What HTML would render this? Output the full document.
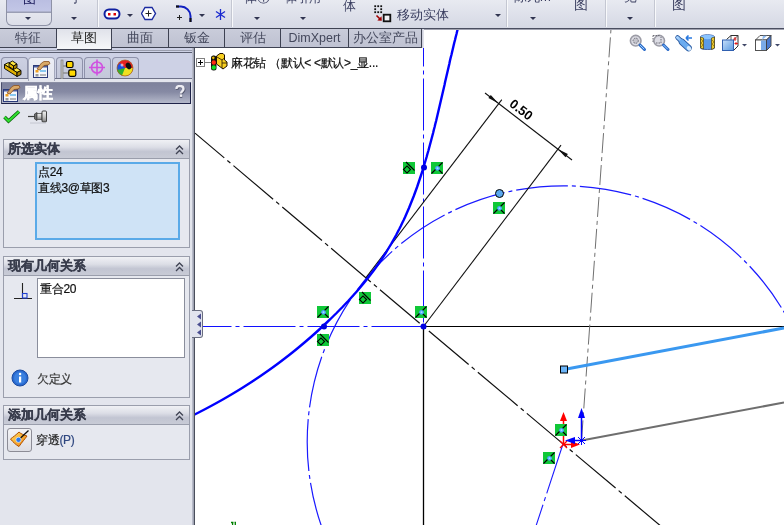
<!DOCTYPE html>
<html><head><meta charset="utf-8">
<style>
*{margin:0;padding:0;box-sizing:border-box}
html,body{width:784px;height:525px;overflow:hidden;background:#fff;font-family:"Liberation Sans",sans-serif}
#root{position:relative;width:784px;height:525px;overflow:hidden;background:#fff;will-change:transform}
.abs{position:absolute}
#tb{left:0;top:0;width:784px;height:29px;background:linear-gradient(#e8eaf1,#d5d8e4);border-bottom:1px solid #4a4e60;box-shadow:0 1px 0 #a0a2b0}
.sep{position:absolute;top:0;width:2px;height:27px;border-left:1px solid #c4c7d2;border-right:1px solid #f8f9fb}
.dd{position:absolute;width:0;height:0;border-left:3px solid transparent;border-right:3px solid transparent;border-top:3px solid #303450}
.tt{position:absolute;font-size:13px;color:#3a3e60;white-space:nowrap;line-height:14px}
#tabs{left:0;top:28px;width:422px;height:20px;z-index:2}
.tab{position:absolute;top:0;height:20px;background:linear-gradient(#c9ccda,#bfc2d2);border:1px solid #3e4252;border-width:1px 1px 1px 0;font-size:13px;color:#44485c;text-align:center;line-height:18px;white-space:nowrap}
.tab.act{background:linear-gradient(#e0e2ea,#f6f7f9);height:22px;color:#222}
#panel{left:0;top:48px;width:195px;height:477px;background:#e3e5ed;border-right:1px solid #4a4e5c}
.ptab{position:absolute;top:9px;width:27px;height:21px;border:1px solid #8e92aa;border-bottom:none;border-radius:4px 4px 0 0;background:linear-gradient(#ccd0e2,#c4c8da)}
.ptab.act{background:linear-gradient(#eceef6,#e4e6ee);height:24px;border-color:#a4a8bc}
.gb{position:absolute;left:3px;width:187px;border:1px solid #9a9eac;background:#e6e8ef}
.gbh{height:19px;background:linear-gradient(#f0f1f5,#dcdee6 40%,#c2c5d2 65%,#c8cbd6);border-bottom:1px solid #9a9eac;font-size:13px;font-weight:bold;color:#383c4c;-webkit-text-stroke:0.3px #383c4c;line-height:18px;padding-left:4px;position:relative}
.chev{position:absolute;right:5px;top:5px;width:9px;height:10px}
.cjk{font-size:12px;color:#101010;line-height:16px;white-space:nowrap;letter-spacing:-0.3px;-webkit-text-stroke:0.2px currentColor}
</style></head><body><div id="root">

<!-- graphics -->
<svg class="abs" style="left:0;top:0" width="784" height="525" viewBox="0 0 784 525">
 <rect x="195" y="29" width="589" height="496" fill="#fff"/>
 <!-- big dash-dot circle -->
 <path d="M819.4,441.9 A256.1,256.1 0 1 1 307.2,441.9 A256.1,256.1 0 1 1 819.4,441.9" fill="none" stroke="#1a1aff" stroke-width="1.2" stroke-dasharray="52 4 4 4" stroke-dashoffset="57"/>
 <!-- vertical blue centerline -->
 <line x1="423.5" y1="326.5" x2="423.5" y2="29" stroke="#1010ff" stroke-width="1" stroke-dasharray="52 4 4 4" stroke-dashoffset="-4"/>
 <line x1="423.5" y1="326.5" x2="195" y2="326.5" stroke="#1010ff" stroke-width="1" stroke-dasharray="52 4 4 4"/>
 <!-- black solids -->
 <line x1="423.5" y1="326.5" x2="423.5" y2="525" stroke="#000" stroke-width="1.3"/>
 <line x1="423.5" y1="326.5" x2="784" y2="326.5" stroke="#000" stroke-width="1.2"/>
 <!-- diagonal dash-dot black -->
 <line x1="423.5" y1="326.5" x2="195" y2="133.1" stroke="#111" stroke-width="1.2" stroke-dasharray="52 4 4 4" stroke-dashoffset="-5"/>
 <line x1="423.5" y1="326.5" x2="661.9" y2="527" stroke="#111" stroke-width="1.2" stroke-dasharray="52 4 4 4" stroke-dashoffset="57"/>
 <!-- extension lines -->
 <line x1="366" y1="277.6" x2="501.8" y2="99.6" stroke="#111" stroke-width="1.1"/>
 <line x1="423.5" y1="326.5" x2="561" y2="145.2" stroke="#111" stroke-width="1.1"/>
 <!-- dimension line -->
 <line x1="485" y1="93" x2="572" y2="160" stroke="#111" stroke-width="1.1"/>
 <polygon points="498.3,103.2 488.4,98.1 490.8,94.9" fill="#111"/>
 <polygon points="557.8,149.1 565.5,157.2 567.9,154" fill="#111"/>
 <text x="0" y="0" transform="translate(508.5,105.5) rotate(37.6)" font-family="Liberation Sans" font-size="13" font-weight="bold" fill="#000">0.50</text>
 <!-- thick blue curve -->
 <path d="M459.6,22.0 L458.8,25.0 L458.0,28.0 L457.2,31.0 L456.5,34.0 L455.7,37.0 L455.0,40.0 L454.2,43.0 L453.5,46.0 L452.8,49.0 L452.1,52.0 L451.4,55.0 L450.6,58.0 L449.9,61.0 L449.3,64.0 L448.6,67.0 L447.9,70.0 L447.2,73.0 L446.5,76.0 L445.8,79.0 L445.1,82.0 L444.5,85.0 L443.8,88.0 L443.1,91.0 L442.4,94.0 L441.7,97.0 L441.0,100.0 L440.3,103.0 L439.6,106.0 L438.9,109.0 L438.2,112.0 L437.5,115.0 L436.8,118.0 L436.1,121.0 L435.3,124.0 L434.6,127.0 L433.8,130.0 L433.1,133.0 L432.3,136.0 L431.5,139.0 L430.7,142.0 L429.9,145.0 L429.1,148.0 L428.3,151.0 L427.4,154.0 L426.6,157.0 L425.7,160.0 L424.8,163.0 L423.9,166.0 L423.0,169.0 L422.1,172.0 L421.1,175.0 L420.1,178.0 L419.1,181.0 L418.1,184.0 L417.1,187.0 L416.0,190.0 L414.9,193.0 L413.8,196.0 L412.6,199.0 L411.4,202.0 L410.2,205.0 L409.0,208.0 L407.7,211.0 L406.4,214.0 L405.1,217.0 L403.7,220.0 L402.2,223.0 L400.8,226.0 L399.3,229.0 L397.7,232.0 L396.2,235.0 L394.5,238.0 L392.8,241.0 L391.1,244.0 L389.3,247.0 L387.5,250.0 L385.7,253.0 L383.7,256.0 L381.8,259.0 L379.7,262.0 L377.6,265.0 L375.5,268.0 L373.3,271.0 L371.0,274.0 L368.7,277.0 L366.3,280.0 L363.9,283.0 L361.4,286.0 L358.9,289.0 L356.3,292.0 L353.6,295.0 L350.9,298.0 L348.2,301.0 L345.3,304.0 L342.5,307.0 L339.5,310.0 L336.6,313.0 L333.5,316.0 L330.5,319.0 L327.3,322.0 L324.1,325.0 L320.9,328.0 L317.6,331.0 L314.3,334.0 L310.9,337.0 L307.4,340.0 L303.9,343.0 L300.3,346.0 L296.7,349.0 L293.0,352.0 L289.2,355.0 L285.3,358.0 L281.4,361.0 L277.4,364.0 L273.3,367.0 L269.1,370.0 L264.8,373.0 L260.5,376.0 L256.0,379.0 L251.5,382.0 L246.8,385.0 L242.1,388.0 L237.2,391.0 L232.2,394.0 L227.1,397.0 L221.9,400.0 L216.5,403.0 L211.0,406.0 L205.4,409.0 L199.6,412.0 L193.7,415.0 L187.7,418.0 L181.5,421.0" fill="none" stroke="#0000ff" stroke-width="2.4"/>
 <!-- gray dash-dot near vertical -->
 <line x1="611" y1="29" x2="581.5" y2="440.5" stroke="#707070" stroke-width="1" stroke-dasharray="20 4 4 4" stroke-dashoffset="23.6"/>
 <!-- gray solid line -->
 <line x1="581.5" y1="440.5" x2="784" y2="402.5" stroke="#6e6e6e" stroke-width="2"/>
 <!-- light blue selected line -->
 <line x1="564" y1="369.5" x2="784" y2="328" stroke="#3a98f0" stroke-width="3"/>
 <rect x="560.5" y="366" width="7" height="7" fill="#6ab4f8" stroke="#000" stroke-width="1"/>
 <!-- blue dash-dot from origin -->
 <line x1="563" y1="444" x2="536" y2="526" stroke="#1a1aff" stroke-width="1.1" stroke-dasharray="52 4 4 4"/>
 <!-- points -->
 <circle cx="423.5" cy="326.5" r="3" fill="#0000e0"/>
 <circle cx="424" cy="167.5" r="3" fill="#0000e0"/>
 <circle cx="324" cy="326.5" r="3" fill="#0000e0"/>
 <circle cx="499.5" cy="193.5" r="4" fill="#5aa8f0" stroke="#000" stroke-width="1"/>
 <!-- triads -->
 <g stroke="#ff0000" stroke-width="1.5" fill="#ff0000">
  <line x1="563.5" y1="444.5" x2="563.5" y2="420"/>
  <polygon points="560,421 567,421 563.5,412" stroke="none"/>
  <line x1="563.5" y1="444.5" x2="572" y2="444.5"/>
  <polygon points="571,441 571,448 580,444.5" stroke="none"/>
  <path d="M560,441 L567,448 M567,441 L560,448" stroke-width="1.3"/>
 </g>
 <g stroke="#0000ff" stroke-width="1.5" fill="#0000ff">
  <line x1="581.5" y1="440.5" x2="581.5" y2="417"/>
  <polygon points="578,418 585,418 581.5,408" stroke="none"/>
  <line x1="581.5" y1="440.5" x2="574" y2="440.5"/>
  <polygon points="575,437 575,444 565,440.5" stroke="none"/>
  <path d="M578,437 L585,444 M585,437 L578,444 M581.5,436 V445 M577,440.5 H586" stroke-width="1"/>
 </g>
 <!-- relation icons -->
 
 <g transform="translate(403,162)"><rect x="0" y="0" width="12" height="12" fill="#10c838"/><path d="M3,0 L11.5,8.5" stroke="#000" stroke-width="1.1"/><rect x="1.5" y="5" width="5" height="5" transform="rotate(45 4 7.5)" fill="none" stroke="#000" stroke-width="1.1"/></g>
 <g transform="translate(431,162)"><rect x="0" y="0" width="12" height="12" fill="#10c838"/><path d="M0.5,11.5 L11.5,0.5 M6,6 L11.5,11.5" stroke="#000" stroke-width="1.1"/><circle cx="6.5" cy="6.3" r="2.4" fill="#4aa8ff"/><circle cx="6.5" cy="6.3" r="1" fill="#a8dcff"/></g>
 <g transform="translate(415,306)"><rect x="0" y="0" width="12" height="12" fill="#10c838"/><path d="M0.5,11.5 L11.5,0.5 M6,6 L11.5,11.5" stroke="#000" stroke-width="1.1"/><circle cx="6.5" cy="6.3" r="2.4" fill="#4aa8ff"/><circle cx="6.5" cy="6.3" r="1" fill="#a8dcff"/></g>
 <g transform="translate(317,306)"><rect x="0" y="0" width="12" height="12" fill="#10c838"/><path d="M0.5,11.5 L11.5,0.5 M6,6 L11.5,11.5" stroke="#000" stroke-width="1.1"/><circle cx="6.5" cy="6.3" r="2.4" fill="#4aa8ff"/><circle cx="6.5" cy="6.3" r="1" fill="#a8dcff"/></g>
 <g transform="translate(317,334)"><rect x="0" y="0" width="12" height="12" fill="#10c838"/><path d="M3,0 L11.5,8.5" stroke="#000" stroke-width="1.1"/><rect x="1.5" y="5" width="5" height="5" transform="rotate(45 4 7.5)" fill="none" stroke="#000" stroke-width="1.1"/></g>
 <g transform="translate(359,292)"><rect x="0" y="0" width="12" height="12" fill="#10c838"/><path d="M3,0 L11.5,8.5" stroke="#000" stroke-width="1.1"/><rect x="1.5" y="5" width="5" height="5" transform="rotate(45 4 7.5)" fill="none" stroke="#000" stroke-width="1.1"/></g>
 <g transform="translate(493,202)"><rect x="0" y="0" width="12" height="12" fill="#10c838"/><path d="M0.5,11.5 L11.5,0.5 M6,6 L11.5,11.5" stroke="#000" stroke-width="1.1"/><circle cx="6.5" cy="6.3" r="2.4" fill="#4aa8ff"/><circle cx="6.5" cy="6.3" r="1" fill="#a8dcff"/></g>
 <g transform="translate(555,424)"><rect x="0" y="0" width="12" height="12" fill="#10c838"/><path d="M0.5,11.5 L11.5,0.5 M6,6 L11.5,11.5" stroke="#000" stroke-width="1.1"/><circle cx="6.5" cy="6.3" r="2.4" fill="#4aa8ff"/><circle cx="6.5" cy="6.3" r="1" fill="#a8dcff"/></g>
 <g transform="translate(543,452)"><rect x="0" y="0" width="12" height="12" fill="#10c838"/><path d="M0.5,11.5 L11.5,0.5 M6,6 L11.5,11.5" stroke="#000" stroke-width="1.1"/><circle cx="6.5" cy="6.3" r="2.4" fill="#4aa8ff"/><circle cx="6.5" cy="6.3" r="1" fill="#a8dcff"/></g>
 <path d="M231,522.5 H233.5 M232.6,522 V526 M234.5,522.5 H236 M235.3,522 V526" stroke="#008000" stroke-width="1.3" fill="none"/>
</svg>

<!-- toolbar -->
<div id="tb" class="abs">
 <div class="abs" style="left:6px;top:-3px;width:46px;height:29px;border:1px solid #8e92a6;border-top:none;border-radius:0 0 6px 6px;background:linear-gradient(#b8bce0 0,#c2c6e6 14px,#9a9eb4 15px,#9a9eb4 16px,#e4e6ee 16px,#dcdee8)"></div>
 <div class="tt" style="left:23px;top:-8px;color:#1a1a5a">图</div>
 <div class="tt" style="left:68px;top:-9px">寸</div>
 <div class="dd" style="left:25px;top:17px"></div>
 <div class="dd" style="left:71px;top:17px"></div>
 <div class="sep" style="left:97px"></div>
 <svg class="abs" style="left:103px;top:8px" width="20" height="13"><rect x="1.5" y="1.5" width="15" height="9" rx="4.5" fill="#fff" stroke="#1020a0" stroke-width="2"/><rect x="5" y="5" width="2.5" height="2.5" fill="#d00"/><rect x="10.5" y="5" width="2.5" height="2.5" fill="#d00"/></svg>
 <div class="dd" style="left:127px;top:14px"></div>
 <svg class="abs" style="left:141px;top:6px" width="16" height="15"><polygon points="4,1.5 11,1.5 14.5,7.5 11,13.5 4,13.5 0.5,7.5" fill="#fff" stroke="#1a2aa0" stroke-width="1.4"/><path d="M7.5,4.5 V10.5 M4.5,7.5 H10.5" stroke="#222" stroke-width="1"/></svg>
 <svg class="abs" style="left:175px;top:5px" width="18" height="18"><path d="M1,1.5 H6 C11,1.5 15.5,6 15.5,11 V17" fill="none" stroke="#1020c0" stroke-width="2"/><path d="M1,1.5 H4" stroke="#111" stroke-width="2"/><path d="M15.5,13 V17" stroke="#111" stroke-width="2"/><path d="M4.5,10 V15 M2,12.5 H7" stroke="#222" stroke-width="1"/></svg>
 <div class="dd" style="left:199px;top:14px"></div>
 <svg class="abs" style="left:215px;top:9px" width="11" height="11"><path d="M5.5,0 V11 M1,2.5 L10,8.5 M10,2.5 L1,8.5" stroke="#1a2ad0" stroke-width="1.3"/></svg>
 <div class="sep" style="left:231px"></div>
 <div class="tt" style="left:244px;top:-9px">体①</div>
 <div class="dd" style="left:254px;top:17px"></div>
 <div class="tt" style="left:285px;top:-9px;font-size:12px">体引用</div>
 <div class="dd" style="left:300px;top:17px"></div>
 <div class="tt" style="left:343px;top:-1px">体</div>
 <svg class="abs" style="left:374px;top:5px" width="18" height="18"><g fill="#111"><rect x="0.3" y="0.3" width="1.8" height="1.8"/><rect x="3.3" y="0.3" width="1.8" height="1.8"/><rect x="6.3" y="0.3" width="1.8" height="1.8"/><rect x="0.3" y="3.3" width="1.8" height="1.8"/><rect x="6.3" y="3.3" width="1.8" height="1.8"/><rect x="0.3" y="6.3" width="1.8" height="1.8"/><rect x="3.3" y="6.3" width="1.8" height="1.8"/><rect x="6.3" y="6.3" width="1.8" height="1.8"/></g><path d="M2.5,10.5 L6,14" stroke="#a00000" stroke-width="1.6"/><polygon points="7.8,15.8 3.3,15.5 7.5,11.3" fill="#a00000"/><rect x="9.7" y="9.7" width="6.6" height="6.6" fill="#f0f0f4" stroke="#111" stroke-width="1.8"/></svg>
 <div class="tt" style="left:397px;top:8px">移动实体</div>
 <div class="dd" style="left:495px;top:14px"></div>
 <div class="sep" style="left:506px"></div>
 <div class="tt" style="left:514px;top:-10px">陈九m</div>
 <div class="dd" style="left:530px;top:17px"></div>
 <div class="tt" style="left:574px;top:-3px;font-size:14px">图</div>
 <div class="sep" style="left:605px"></div>
 <div class="tt" style="left:624px;top:-10px">览</div>
 <div class="dd" style="left:627px;top:17px"></div>
 <div class="sep" style="left:654px"></div>
 <div class="tt" style="left:672px;top:-3px;font-size:14px">图</div>
</div>

<!-- tabs -->
<div id="tabs" class="abs">
 <div class="tab" style="left:0;width:57px">特征</div>
 <div class="tab" style="left:112px;width:57px">曲面</div>
 <div class="tab" style="left:169px;width:56px">钣金</div>
 <div class="tab" style="left:225px;width:56px">评估</div>
 <div class="tab" style="left:281px;width:68px;font-size:12.5px">DimXpert</div>
 <div class="tab" style="left:349px;width:73px">办公室产品</div>
 <div class="tab act" style="left:57px;width:55px">草图</div>
 <div class="abs" style="left:422px;top:1px;width:2px;height:19px;background:linear-gradient(90deg,#c8cad8,#e8e9f0)"></div>
</div>

<!-- panel -->
<div id="panel" class="abs">
 <div class="abs" style="left:0;top:0;width:192px;height:30px;background:#cdd1e5"></div>
 <div class="abs" style="left:0;top:2px;width:192px;height:1px;background:#9a9eae"></div>
 <div class="abs" style="left:0;top:4px;width:192px;height:1px;background:#5a5e70"></div>
 <div class="abs" style="left:0;top:30px;width:192px;height:1px;background:#6e7288"></div>
 <div class="abs" style="left:192px;top:0;width:2px;height:477px;background:linear-gradient(90deg,#c4c7d4,#9498a8)"></div>
 <div class="ptab" style="left:1px"></div>
 <div class="ptab act" style="left:28px"></div>
 <div class="ptab" style="left:56px"></div>
 <div class="ptab" style="left:84px"></div>
 <div class="ptab" style="left:112px"></div>
 <svg class="abs" style="left:0;top:9px" width="140" height="22">
  <!-- tab1 3d block -->
  <g stroke="#000" stroke-width="0.9" stroke-linejoin="round" transform="translate(0,2.5)">
   <polygon points="4.5,5 8.5,3 21,11 17,13" fill="#ffe840"/>
   <polygon points="4.5,5 17,13 17,17 4.5,9" fill="#e0b000"/>
   <polygon points="17,13 21,11 21,15 17,17" fill="#a88000"/>
   <polygon points="9,3.5 12.5,1.5 17,4.5 13.5,6.5" fill="#ffe840"/>
   <polygon points="9,3.5 13.5,6.5 13.5,10 9,7" fill="#e8b800"/>
   <polygon points="13.5,6.5 17,4.5 17,8 13.5,10" fill="#b08800"/>
  </g>
  <!-- tab2 property -->
  <g transform="translate(33,2)">
   <rect x="0.5" y="6.5" width="14" height="12" fill="#f4f6fa" stroke="#2a3a7a"/>
   <rect x="1" y="7" width="13" height="1.5" fill="#4a5a9a"/>
   <rect x="2.5" y="11" width="3" height="2.5" fill="#f0a020"/>
   <rect x="7" y="11" width="6" height="2" fill="#88c8f0"/>
   <rect x="2.5" y="15" width="3" height="2.5" fill="#999"/>
   <path d="M7,16 H13" stroke="#777" stroke-width="1"/>
   <path d="M4,10 L8.5,4 L11,2.5 H16 L17,4.5 L15,6 L11,6.5 L7,11 Z" fill="#d8a868" stroke="#8a5020" stroke-width="0.8"/>
  </g>
  <!-- tab3 tree -->
  <g transform="translate(56,2)">
   <rect x="5" y="1" width="2" height="19" fill="#c0c0c0" stroke="#707070" stroke-width="0.6"/>
   <path d="M7,7 H12 M7,14 H14" stroke="#909090" stroke-width="1.5"/>
   <rect x="10.5" y="2.5" width="6.5" height="6" rx="1.5" fill="#ffd800" stroke="#000" stroke-width="1.2"/>
   <rect x="12.8" y="10.8" width="7" height="6.5" rx="1.5" fill="#ffd800" stroke="#000" stroke-width="1.2"/>
  </g>
  <!-- tab4 crosshair -->
  <g transform="translate(97,12.5)" stroke="#d050e0" fill="none" stroke-width="1.6">
   <circle cx="0" cy="-2" r="5.5"/><path d="M-8,-2 H8 M0,-10 V6"/>
  </g>
  <!-- tab5 ball -->
  <g transform="translate(125,12)">
   <circle cx="0" cy="-1" r="8" fill="#e82020"/>
   <path d="M-8,-1 A8,8 0 0 0 8,-1 Z" fill="#f0e020"/>
   <path d="M-8,-1 L0,-1 L-3,6.5 A8,8 0 0 1 -8,-1Z" fill="#30b030"/>
   <path d="M-7.5,-4 L0,-1 L-8,1 Z" fill="#2050e0"/>
   <path d="M-5,-6 A8,8 0 0 0 -8,-1 L0,-1 Z" fill="#2050e0"/>
   <ellipse cx="3.5" cy="-3" rx="2.5" ry="3.5" fill="#111" transform="rotate(-30 3.5 -3)"/>
   <circle cx="0" cy="-1" r="8" fill="none" stroke="#a06020" stroke-width="0.7"/>
   <circle cx="-3" cy="-4" r="1.5" fill="#fff" opacity="0.6"/>
  </g>
 </svg>
 <!-- PM header -->
 <div class="abs" style="left:1px;top:34px;width:190px;height:22px;border:1px solid #1e2248;border-top-color:#8a8ea4;border-left-color:#4a4e6a;background:linear-gradient(#7e829c,#868aa4 45%,#a8acc0 85%,#b4b8ca)"></div>
 <div class="abs" style="left:23px;top:34px;font-size:15px;font-weight:bold;color:#fff;line-height:21px;-webkit-text-stroke:0.5px #fff">属性</div>
 <svg class="abs" style="left:2px;top:36px" width="20" height="18"><g transform="translate(1,-1)">
   <rect x="0.5" y="6.5" width="14" height="12" fill="#f4f6fa" stroke="#2a3a7a"/>
   <rect x="1" y="7" width="13" height="1.5" fill="#4a5a9a"/>
   <rect x="2.5" y="11" width="3" height="2.5" fill="#f0a020"/>
   <rect x="7" y="11" width="6" height="2" fill="#88c8f0"/>
   <rect x="2.5" y="15" width="3" height="2.5" fill="#999"/>
   <path d="M7,16 H13" stroke="#777" stroke-width="1"/>
   <path d="M4,10 L8.5,4 L11,2.5 H16 L17,4.5 L15,6 L11,6.5 L7,11 Z" fill="#d8a868" stroke="#8a5020" stroke-width="0.8"/></g></svg>
 <svg class="abs" style="left:174px;top:37px" width="12" height="13"><path d="M2.5,4 C2.5,1.5 4,1 6,1 C8,1 9.5,2 9.5,4 C9.5,6 7,6.5 7,8.5" fill="none" stroke="#50546a" stroke-width="2.6" transform="translate(0.7,0.7)"/><rect x="5.7" y="10.2" width="2.6" height="2.6" fill="#50546a"/><path d="M2.5,4 C2.5,1.5 4,1 6,1 C8,1 9.5,2 9.5,4 C9.5,6 7,6.5 7,8.5" fill="none" stroke="#ececf2" stroke-width="2.4"/><rect x="5.8" y="9.5" width="2.4" height="2.4" fill="#ececf2"/></svg>
 <!-- ok / pin -->
 <svg class="abs" style="left:3px;top:62px" width="18" height="14"><path d="M1.5,7 L5.5,11 L16,1.5" fill="none" stroke="#0a600a" stroke-width="3.6" stroke-linejoin="miter"/><path d="M1.5,7 L5.5,11 L16,1.5" fill="none" stroke="#30e030" stroke-width="2" stroke-linejoin="miter"/></svg>
 <svg class="abs" style="left:27px;top:62px" width="22" height="14"><path d="M1,6.5 H8" stroke="#404040" stroke-width="1.2"/><path d="M7.5,4 L10,2.5 V10.5 L7.5,9 Z" fill="#707070" stroke="#303030" stroke-width="0.7"/><rect x="10" y="3.5" width="5" height="6" fill="url(#pinb)" stroke="#404040" stroke-width="0.7"/><rect x="15" y="1" width="4.5" height="11" rx="1" fill="url(#pinb)" stroke="#303030" stroke-width="0.9"/><path d="M3,13 H19" stroke="#c4c6d0" stroke-width="1"/><defs><linearGradient id="pinb" x1="0" y1="0" x2="0" y2="1"><stop offset="0" stop-color="#f4f4f4"/><stop offset="0.5" stop-color="#c8c8c8"/><stop offset="1" stop-color="#808080"/></linearGradient></defs></svg>

 <!-- group 1 -->
 <div class="gb" style="top:91px;height:109px">
  <div class="gbh">所选实体<svg class="chev" viewBox="0 0 9 10"><path d="M1,4.5 L4.5,1 L8,4.5 M1,9 L4.5,5.5 L8,9" fill="none" stroke="#404454" stroke-width="1.3"/></svg></div>
 </div>
 <div class="abs" style="left:35px;top:114px;width:145px;height:78px;border:2px solid #5aaae8;background:#cfe3f6;padding:0 0 0 1px">
  <div class="cjk">点24</div><div class="cjk">直线3@草图3</div>
 </div>
 <!-- group 2 -->
 <div class="gb" style="top:208px;height:142px">
  <div class="gbh">现有几何关系<svg class="chev" viewBox="0 0 9 10"><path d="M1,4.5 L4.5,1 L8,4.5 M1,9 L4.5,5.5 L8,9" fill="none" stroke="#404454" stroke-width="1.3"/></svg></div>
 </div>
 <div class="abs" style="left:37px;top:230px;width:148px;height:80px;border:1px solid #8a8e9c;background:#fff;padding:2px 0 0 2px"><div class="cjk">重合20</div></div>
 <svg class="abs" style="left:13px;top:234px" width="20" height="18"><path d="M9.5,1 V16.5 M1,16.5 H19" stroke="#222" stroke-width="1.1"/><rect x="9.5" y="11.5" width="4.5" height="4.5" fill="none" stroke="#2040d0" stroke-width="1.1"/></svg>
 <svg class="abs" style="left:11px;top:321px" width="18" height="18"><circle cx="9" cy="9" r="8" fill="#2a6ad0" stroke="#1a4aa0"/><circle cx="9" cy="9" r="6" fill="#3a80e0"/><rect x="8" y="7.5" width="2.2" height="6" fill="#fff"/><circle cx="9.1" cy="5" r="1.2" fill="#fff"/></svg>
 <div class="abs cjk" style="left:37px;top:323px;color:#383838">欠定义</div>
 <!-- group 3 -->
 <div class="gb" style="top:357px;height:55px">
  <div class="gbh">添加几何关系<svg class="chev" viewBox="0 0 9 10"><path d="M1,4.5 L4.5,1 L8,4.5 M1,9 L4.5,5.5 L8,9" fill="none" stroke="#404454" stroke-width="1.3"/></svg></div>
 </div>
 <div class="abs" style="left:7px;top:380px;width:25px;height:24px;border:1px solid #8c8c96;border-radius:3px;background:linear-gradient(#f4f4f6,#dcdde4)"></div>
 <svg class="abs" style="left:9px;top:382px" width="22" height="20"><defs><linearGradient id="flg" x1="0" y1="0" x2="1" y2="1"><stop offset="0" stop-color="#ffe060"/><stop offset="1" stop-color="#f08010"/></linearGradient></defs><path d="M1.5,9 C4,7 7,5 10,2 C12,4 15,5 18,6 C16,9 13,12 10,16.5 C7,15 4,12 1.5,9 Z" fill="url(#flg)" stroke="#b05000" stroke-width="1"/><path d="M10,9.5 L19.5,0.5" stroke="#101010" stroke-width="1.3"/><circle cx="9.5" cy="9.8" r="2.6" fill="#2a7af0" stroke="#fff" stroke-width="0.6"/></svg>
 <div class="abs cjk" style="left:36px;top:384px;color:#202020">穿透<span style="color:#304880">(P)</span></div>
 <!-- splitter handle -->
</div>
<div class="abs" style="left:192px;top:310px;width:11px;height:28px;border:1px solid #6a6e80;border-left:none;border-radius:0 3px 3px 0;background:#e2e4ee"></div>
<svg class="abs" style="left:196px;top:313px" width="6" height="24"><polygon points="1,3.5 5,0.5 5,6.5" fill="#4a4e90"/><polygon points="1,11.5 5,8.5 5,14.5" fill="#4a4e90"/><polygon points="1,19.5 5,16.5 5,22.5" fill="#4a4e90"/></svg>

<!-- feature tree label -->
<svg class="abs" style="left:195px;top:52px" width="36" height="20">
 <rect x="1.5" y="6.5" width="8" height="8" fill="#fff" stroke="#808080"/>
 <path d="M3,10.5 H8 M5.5,8 V13" stroke="#000" stroke-width="1"/>
 <path d="M10,10.5 H16" stroke="#808080"/>
 <rect x="16" y="3.5" width="5.5" height="15" rx="2.5" fill="#101010"/>
 <circle cx="18.8" cy="10.5" r="2.2" fill="#ff2a10"/>
 <circle cx="18.8" cy="15.5" r="2.2" fill="#10e020"/>
 <circle cx="18.3" cy="5.8" r="1.6" fill="#f0c000" stroke="#000" stroke-width="0.5"/>
 <path d="M21.5,4 L25,1.5 H28 L29.5,3 V8 L32,10 V14 L28,17 L21.5,12 Z" fill="#f8d020" stroke="#201000" stroke-width="1" stroke-linejoin="round"/>
 <path d="M22,5 L27,8 V16 M27,8 L29.5,6 M27,11 L32,11" fill="none" stroke="#201000" stroke-width="0.8"/>
</svg>
<div class="abs cjk" style="left:231px;top:55px;color:#101010">麻花钻 （默认&lt; &lt;默认&gt;_显...</div>

<!-- view toolbar icons -->
<svg class="abs" style="left:626px;top:31px" width="158" height="23">
 <defs>
  <linearGradient id="hb" x1="0" y1="0" x2="1" y2="1"><stop offset="0" stop-color="#a8d4ff"/><stop offset="1" stop-color="#3a7ad8"/></linearGradient>
  <linearGradient id="cb" x1="0" y1="0" x2="1" y2="1"><stop offset="0" stop-color="#c8e0fa"/><stop offset="1" stop-color="#5a9ae0"/></linearGradient>
 </defs>
 <!-- zoom to fit -->
 <circle cx="9.7" cy="9.7" r="5.3" fill="#dcdce4" stroke="#9c9ca6" stroke-width="1.6"/>
 <circle cx="9.7" cy="9.7" r="2.6" fill="#c4c4cc" stroke="#6c6c76" stroke-width="1" stroke-dasharray="1.5 1"/>
 <path d="M14,14 L18.5,18.5" stroke="#2a6ac8" stroke-width="3" stroke-linecap="round"/>
 <path d="M14.2,14.2 L18,18" stroke="#9ad0ff" stroke-width="1" stroke-linecap="round"/>
 <!-- zoom to area -->
 <circle cx="33.2" cy="9.7" r="5.3" fill="#dcdce4" stroke="#9c9ca6" stroke-width="1.6"/>
 <path d="M27,4.5 H34 M27,4.5 V12 M30,12 H35 V6" fill="none" stroke="#6c6c76" stroke-width="1" stroke-dasharray="1.5 1"/>
 <path d="M37.5,14 L42,18.5" stroke="#2a6ac8" stroke-width="3" stroke-linecap="round"/>
 <path d="M37.7,14.2 L41.5,18" stroke="#9ad0ff" stroke-width="1" stroke-linecap="round"/>
 <!-- previous view -->
 <path d="M51.5,6.5 L62,16.5" stroke="#2a5aa0" stroke-width="4.5" stroke-linecap="round"/>
 <path d="M56,11 L62.5,17" stroke="#2a5aa0" stroke-width="6.5" stroke-linecap="round"/>
 <path d="M51.5,6.5 L62,16.5" stroke="url(#hb)" stroke-width="3" stroke-linecap="round"/>
 <path d="M56,11 L62.5,17" stroke="#6aacf0" stroke-width="5" stroke-linecap="round"/>
 <ellipse cx="63" cy="17.3" rx="2" ry="2.5" transform="rotate(-45 63 17.3)" fill="#d8ecff"/>
 <path d="M60,7 H66 M60,7 L62.5,4.5 M60,7 L62.5,9.5" fill="none" stroke="#2a7ae0" stroke-width="1.6"/>
 <!-- section view -->
 <path d="M74.5,6 C74.5,3 88.5,3 88.5,6 V17 C88.5,19 74.5,19 74.5,17 Z" fill="#5a9ae8" stroke="#2a4a90" stroke-width="0.8"/>
 <ellipse cx="81.5" cy="6" rx="7" ry="2.2" fill="#8ac4ff"/>
 <path d="M74.5,6 V17 L77.5,18 V7 Z" fill="#e8c830" stroke="#403000" stroke-width="0.6"/>
 <path d="M85.5,7 V18.5 L88.5,17 V6 Z" fill="#e8c830" stroke="#403000" stroke-width="0.6"/>
 <path d="M75,8 L77,10 L75,12 L77,14 L75,16 M86,9 L88,11 L86,13 L88,15" fill="none" stroke="#806000" stroke-width="0.6"/>
 <!-- view orientation -->
 <path d="M100.5,8.5 L105,4.5 H112 V15 L107.5,19.5" fill="none" stroke="#303030" stroke-width="1"/>
 <path d="M105,4.5 V9 M107.5,9 L112,4.5" fill="none" stroke="#303030" stroke-width="0.8"/>
 <rect x="96.5" y="9" width="11" height="10.5" fill="url(#cb)" stroke="#3060b0"/>
 <path d="M109,6 V10 M107.5,8 H110.5 M108.5,12.5 H112 M110,11 V14" stroke="#e02020" stroke-width="1"/>
 <polygon points="116,13 121,13 118.5,15.5" fill="#404868"/>
 <!-- display style -->
 <path d="M129.5,9 L134,4.5 H145 L140.5,9 Z" fill="#fafafa" stroke="#404040" stroke-width="0.9"/>
 <rect x="129.5" y="9" width="11" height="10.5" fill="#ffffff" stroke="#404040" stroke-width="0.9"/>
 <rect x="135" y="9.5" width="5" height="9.5" fill="#7aaae8"/>
 <path d="M140.5,9 L145,4.5 V15 L140.5,19.5 Z" fill="#4a7ad0" stroke="#404040" stroke-width="0.9"/>
 <path d="M137,4.8 L141,4.8 L136,9 Z" fill="#8ab8f0"/>
 <polygon points="149,13 154,13 151.5,15.5" fill="#404868"/>
</svg>

</div></body></html>
